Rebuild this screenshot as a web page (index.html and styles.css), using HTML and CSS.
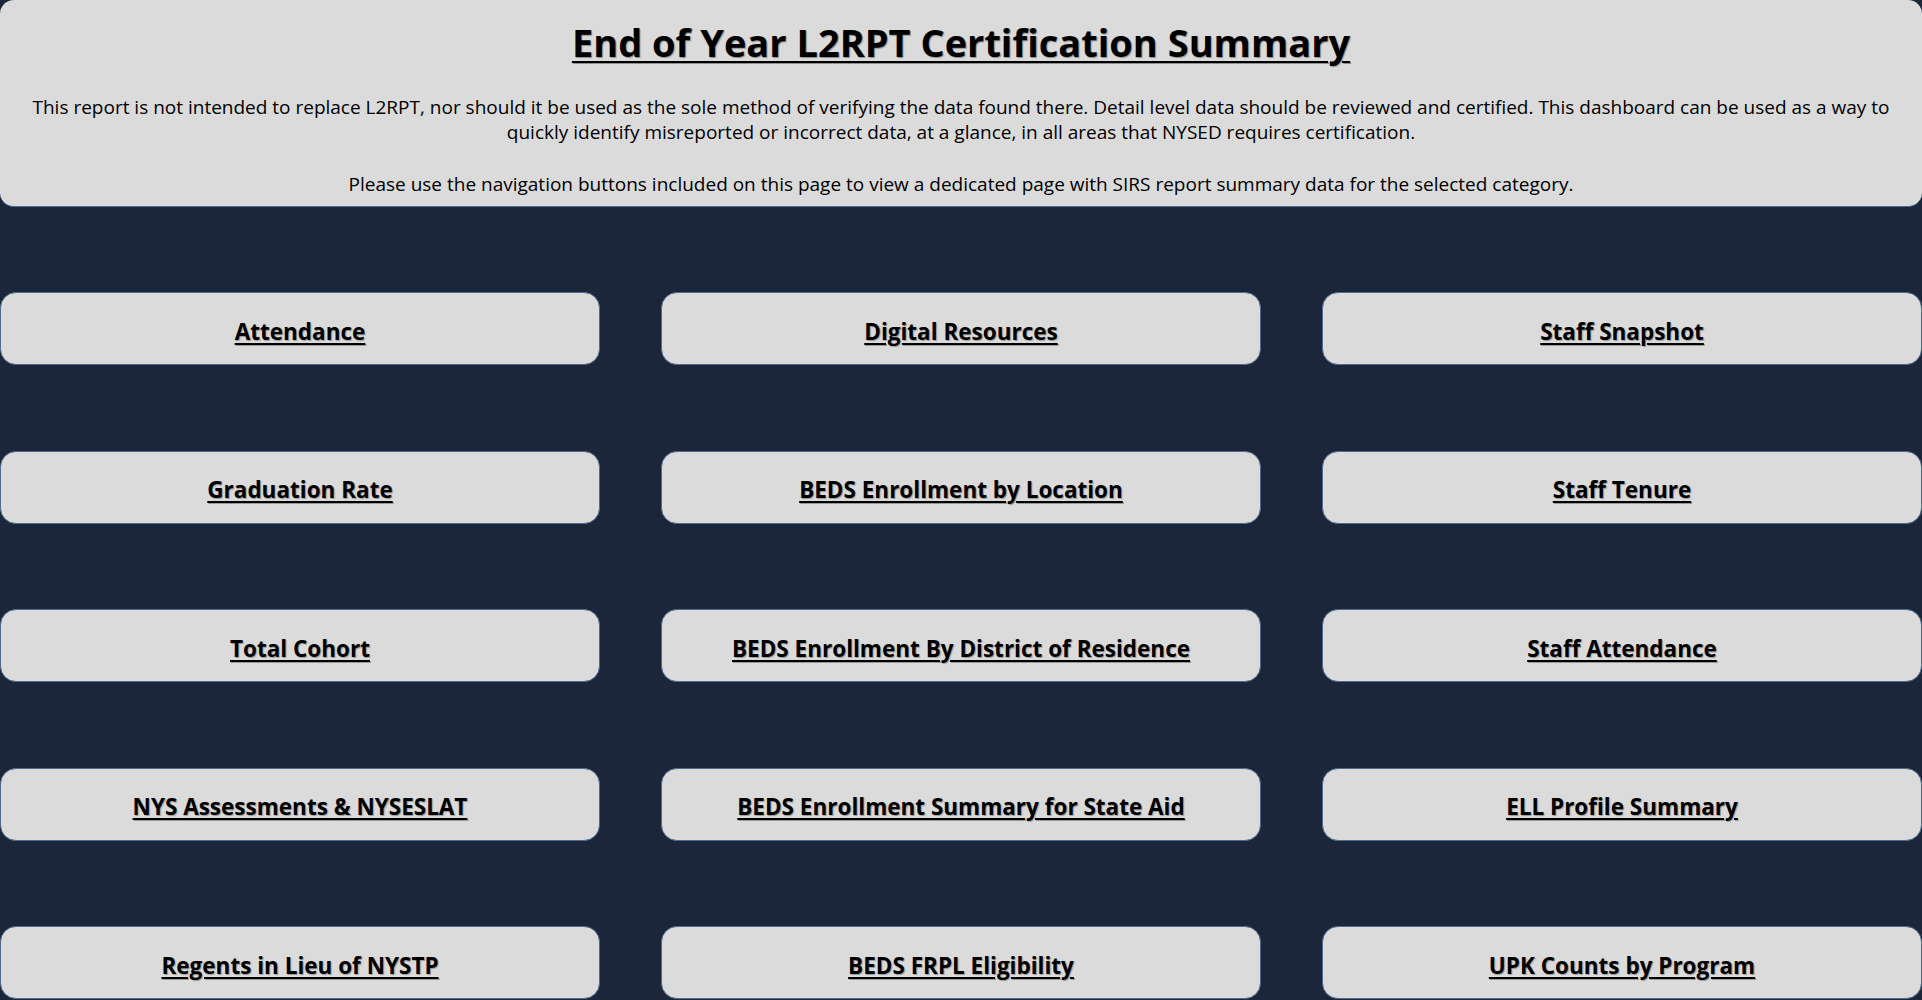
FILE: index.html
```html
<!DOCTYPE html>
<html lang="en">
<head>
    <meta charset="UTF-8">
    <meta name="viewport" content="width=device-width, initial-scale=1.0">
    <title>End of Year L2RPT Certification Summary</title>
    <link rel="stylesheet" href="styles.css">
</head>
<body>
    <header class="summary">
        <h1>End of Year L2RPT Certification Summary</h1>
        <p>This report is not intended to replace L2RPT, nor should it be used as the sole method of verifying the data found there. Detail level data should be reviewed and certified. This dashboard can be used as a way to quickly identify misreported or incorrect data, at a glance, in all areas that NYSED requires certification.</p>
        <p>Please use the navigation buttons included on this page to view a dedicated page with SIRS report summary data for the selected category.</p>
    </header>

    <!-- Navigation buttons, one per report page -->
    <nav class="nav-grid">
        <a class="nav-button" href="#">Attendance</a>
        <a class="nav-button" href="#">Digital Resources</a>
        <a class="nav-button" href="#">Staff Snapshot</a>
        <a class="nav-button" href="#">Graduation Rate</a>
        <a class="nav-button" href="#">BEDS Enrollment by Location</a>
        <a class="nav-button" href="#">Staff Tenure</a>
        <a class="nav-button" href="#">Total Cohort</a>
        <a class="nav-button" href="#">BEDS Enrollment By District of Residence</a>
        <a class="nav-button" href="#">Staff Attendance</a>
        <a class="nav-button" href="#">NYS Assessments &amp; NYSESLAT</a>
        <a class="nav-button" href="#">BEDS Enrollment Summary for State Aid</a>
        <a class="nav-button" href="#">ELL Profile Summary</a>
        <a class="nav-button" href="#">Regents in Lieu of NYSTP</a>
        <a class="nav-button" href="#">BEDS FRPL Eligibility</a>
        <a class="nav-button" href="#">UPK Counts by Program</a>
    </nav>
</body>
</html>
```

FILE: styles.css
```css
body {
    font-family: "Open Sans", "Noto Sans", sans-serif;
    background-color: #1c263a;
    color: #000;
    margin: 0;
    padding: 0;
    height: 1000px;
    overflow: hidden;
}
.summary {
    background-color: #dbdbdb;
    border-bottom: 1px solid #4f6b8c;
    border-radius: 14px;
    height: 207px;
    box-sizing: border-box;
    padding: 17px 30px 0;
    text-align: center;
}
.summary h1 {
    margin: 0 0 28px;
    font-size: 38px;
    line-height: 50px;
    font-weight: 700;
    text-decoration: underline;
    text-decoration-thickness: 2px;
    text-underline-offset: 4px;
    text-shadow: 1px 1px 1px rgba(0, 0, 0, 0.35);
}
.summary p {
    margin: 0 0 28px;
    font-size: 19px;
    line-height: 24.5px;
}
.nav-grid {
    display: grid;
    grid-template-columns: repeat(3, 1fr);
    column-gap: 61px;
    row-gap: 85.5px;
    padding-top: 85px;
}
.nav-button {
    display: flex;
    align-items: center;
    justify-content: center;
    height: 73px;
    box-sizing: border-box;
    padding-top: 5px;
    background-color: #dbdbdb;
    border: 1px solid #4f6b8c;
    border-radius: 16px;
    color: #000;
    font-size: 22.5px;
    font-weight: 700;
    text-decoration: underline;
    text-decoration-thickness: 2px;
    text-underline-offset: 3px;
    text-shadow: 1px 1px 1px rgba(0, 0, 0, 0.3);
}
```
